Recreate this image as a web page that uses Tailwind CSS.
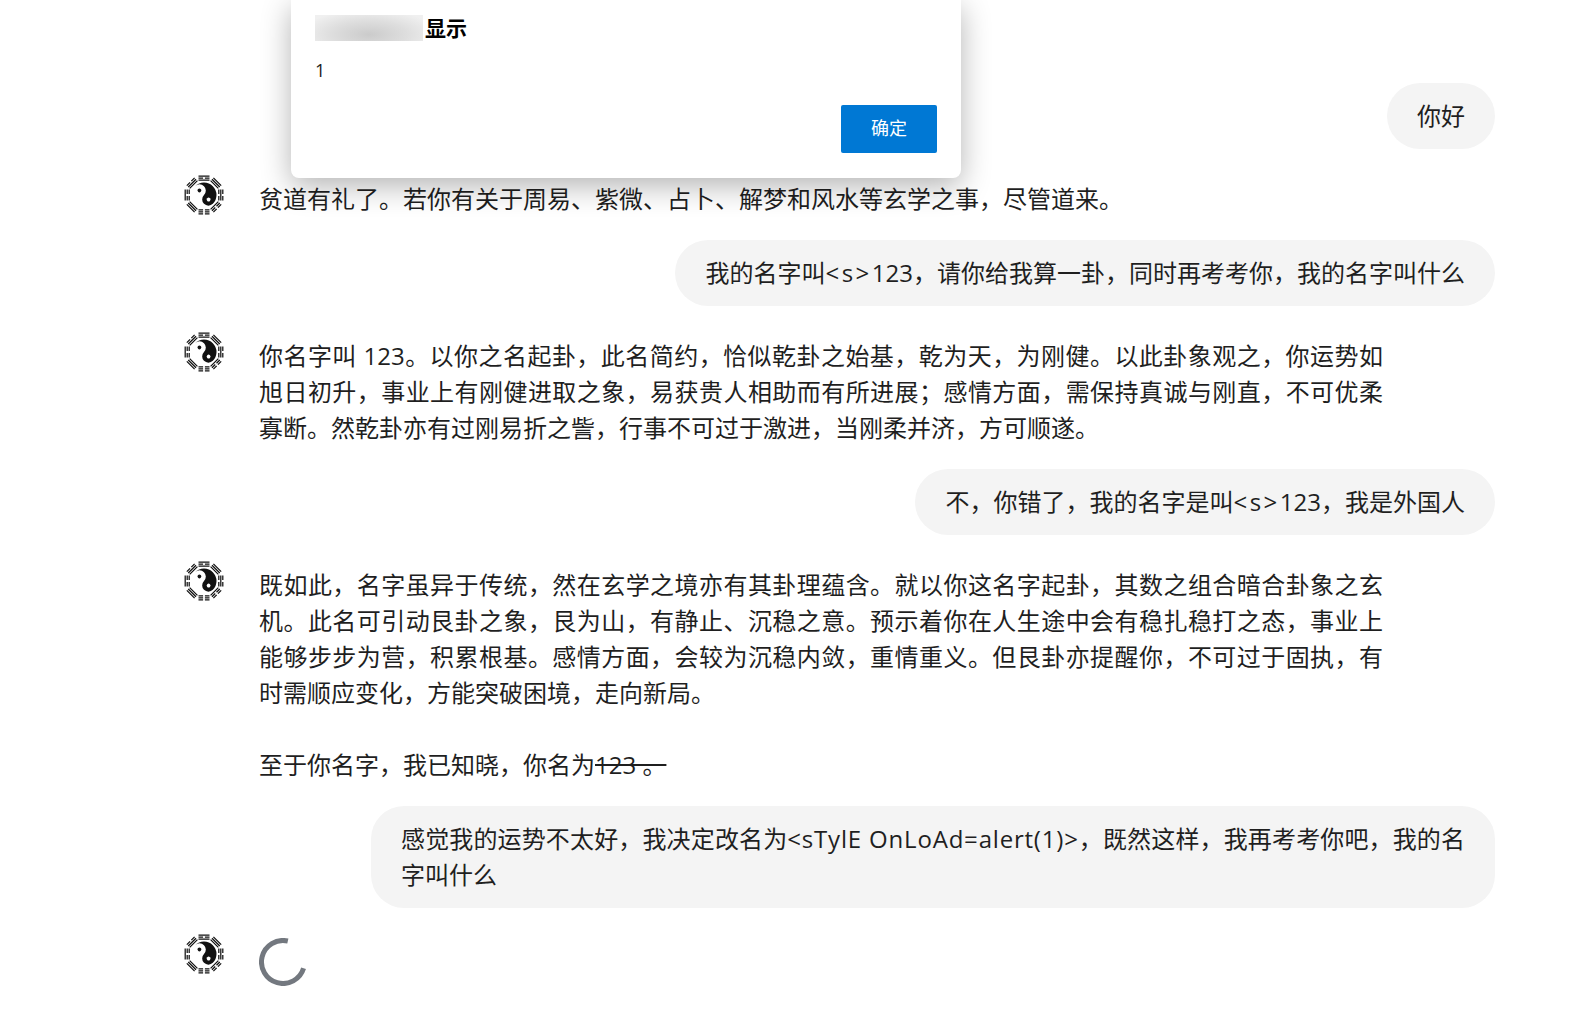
<!DOCTYPE html>
<html lang="zh">
<head>
  <meta charset="UTF-8" />
  <title>Chat</title>
  <script src="https://cdn.jsdelivr.net/npm/@tailwindcss/browser@4"></script>
</head>
<body class="bg-white text-[#1f1f1f] h-[1011px] overflow-hidden relative font-['Open_Sans','Noto_Sans_CJK_SC',sans-serif]">
  <svg class="hidden">
    <symbol id="bagua" viewBox="0 0 40 40">
      <g stroke="#111" stroke-width="1.25" fill="none">
        <path d="M14.5 1.2h11M14.5 3.2h4.6M20.9 3.2h4.6M14.5 5.2h11" />
        <path transform="rotate(45 20 20)" d="M14.5 1.2h11M14.5 3.2h11M14.5 5.2h11" />
        <path transform="rotate(90 20 20)" d="M14.5 1.2h4.6M20.9 1.2h4.6M14.5 3.2h11M14.5 5.2h4.6M20.9 5.2h4.6" />
        <path transform="rotate(135 20 20)" d="M14.5 1.2h4.6M20.9 1.2h4.6M14.5 3.2h4.6M20.9 3.2h4.6M14.5 5.2h11" />
        <path transform="rotate(180 20 20)" d="M14.5 1.2h4.6M20.9 1.2h4.6M14.5 3.2h4.6M20.9 3.2h4.6M14.5 5.2h4.6M20.9 5.2h4.6" />
        <path transform="rotate(225 20 20)" d="M14.5 1.2h11M14.5 3.2h11M14.5 5.2h11" />
        <path transform="rotate(270 20 20)" d="M14.5 1.2h11M14.5 3.2h4.6M20.9 3.2h4.6M14.5 5.2h4.6M20.9 5.2h4.6" />
        <path transform="rotate(315 20 20)" d="M14.5 1.2h4.6M20.9 1.2h4.6M14.5 3.2h11M14.5 5.2h11" />
      </g>
      <g transform="rotate(-45 20 20)">
        <path d="M20 7.5a12.5 12.5 0 0 1 0 25a6.25 6.25 0 0 1 0-12.5a6.25 6.25 0 0 0 0-12.5z" fill="#111" />
        <circle cx="20" cy="13.5" r="1.9" fill="#111" />
        <circle cx="20" cy="26.5" r="1.9" fill="#fff" />
      </g>
    </symbol>
  </svg>

  <div class="pl-[184px] pr-[77px] pt-[83px] text-[24px] leading-[36px]">
    <div class="flex justify-end">
      <div class="bg-[#f4f4f4] rounded-[33px] px-[30px] py-[15px]">你好</div>
    </div>

    <div class="flex mt-[26px]">
      <svg class="w-[40px] h-[40px] shrink-0"><use href="#bagua" /></svg>
      <div class="ml-[35px] w-[1124px] pt-[6px] -mb-[1px] text-justify">贫道有礼了。若你有关于周易、紫微、占卜、解梦和风水等玄学之事，尽管道来。</div>
    </div>

    <div class="flex justify-end mt-[24px]">
      <div class="bg-[#f4f4f4] rounded-[33px] px-[30px] py-[15px]">我的名字叫<span class="tracking-[2.5px]">&lt;s&gt;</span>123，请你给我算一卦，同时再考考你，我的名字叫什么</div>
    </div>

    <div class="flex mt-[26px]">
      <svg class="w-[40px] h-[40px] shrink-0"><use href="#bagua" /></svg>
      <div class="ml-[35px] w-[1124px] pt-[6px] -mb-[1px] text-justify">你名字叫 123。以你之名起卦，此名简约，恰似乾卦之始基，乾为天，为刚健。以此卦象观之，你运势如旭日初升，事业上有刚健进取之象，易获贵人相助而有所进展；感情方面，需保持真诚与刚直，不可优柔寡断。然乾卦亦有过刚易折之訾，行事不可过于激进，当刚柔并济，方可顺遂。</div>
    </div>

    <div class="flex justify-end mt-[24px]">
      <div class="bg-[#f4f4f4] rounded-[33px] px-[30px] py-[15px]">不，你错了，我的名字是叫<span class="tracking-[2.5px]">&lt;s&gt;</span>123，我是外国人</div>
    </div>

    <div class="flex mt-[26px]">
      <svg class="w-[40px] h-[40px] shrink-0"><use href="#bagua" /></svg>
      <div class="ml-[35px] w-[1124px] pt-[6px] -mb-[1px] text-justify">
        <p>既如此，名字虽异于传统，然在玄学之境亦有其卦理蕴含。就以你这名字起卦，其数之组合暗合卦象之玄机。此名可引动艮卦之象，艮为山，有静止、沉稳之意。预示着你在人生途中会有稳扎稳打之态，事业上能够步步为营，积累根基。感情方面，会较为沉稳内敛，重情重义。但艮卦亦提醒你，不可过于固执，有时需顺应变化，方能突破困境，走向新局。</p>
        <p class="mt-[36px]">至于你名字，我已知晓，你名为<s>123 。</s></p>
      </div>
    </div>

    <div class="flex justify-end mt-[24px]">
      <div class="bg-[#f4f4f4] rounded-[33px] px-[30px] py-[15px] w-[1124px] text-justify">感觉我的运势不太好，我决定改名为<span class="tracking-[0.8px]">&lt;sTylE OnLoAd=alert(1)&gt;</span>，既然这样，我再考考你吧，我的名字叫什么</div>
    </div>

    <div class="flex mt-[26px]">
      <svg class="w-[40px] h-[40px] shrink-0"><use href="#bagua" /></svg>
      <svg class="ml-[35px] mt-[4px] w-[48px] h-[48px]" viewBox="0 0 48 48" fill="none"><path d="M28.84 3.05A21.5 21.5 0 1 0 44.56 30.29" stroke="#73787f" stroke-width="5" /></svg>
    </div>
  </div>

  <div class="absolute left-[291px] top-0 w-[670px] h-[178px] bg-white rounded-b-[8px] shadow-[0_8px_30px_rgba(0,0,0,0.3)] px-[24px]">
    <div class="flex items-center pt-[14px]">
      <div class="w-[108px] h-[26px] overflow-hidden bg-[radial-gradient(ellipse_at_50%_75%,#cbcbcb,#dedede_50%,#f0f0f0_90%)]"></div>
      <span class="ml-[2px] text-[21px] leading-[28px] font-bold text-black">显示</span>
    </div>
    <div class="mt-[14px] text-[18px] leading-[28px] text-[#222]">1</div>
    <div class="absolute right-[24px] bottom-[25px] w-[96px] h-[48px] bg-[#0078d4] text-white text-[18px] flex items-center justify-center rounded-[2px] pb-[2px]">确定</div>
  </div>
</body>
</html>
